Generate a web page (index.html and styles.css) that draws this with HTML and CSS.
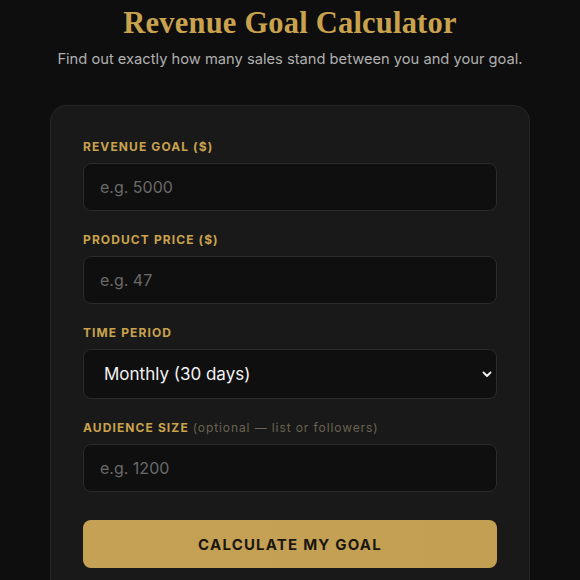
FILE: index.html
```html
<!DOCTYPE html>
<html lang="en">
<head>
<meta charset="utf-8">
<title>Revenue Goal Calculator</title>
<link rel="stylesheet" href="styles.css">
</head>
<body>
<main class="page">
  <header class="hero">
    <h1 class="title">Revenue Goal Calculator</h1>
    <p class="subtitle">Find out exactly how many sales stand between you and your goal.</p>
  </header>
  <form class="card">
    <div class="field">
      <label class="label" for="goal">Revenue Goal ($)</label>
      <input class="input" id="goal" type="text" placeholder="e.g. 5000">
    </div>
    <div class="field">
      <label class="label" for="price">Product Price ($)</label>
      <input class="input" id="price" type="text" placeholder="e.g. 47">
    </div>
    <div class="field">
      <label class="label" for="period">Time Period</label>
      <div class="select-wrap">
        <select class="select" id="period">
          <option>Monthly (30 days)</option>
          <option>Weekly (7 days)</option>
          <option>Quarterly (90 days)</option>
        </select>
        <svg class="chevron" width="10" height="7" viewBox="0 0 10 7"><path d="M1.5 1.5 L5 5 L8.5 1.5" fill="none" stroke="#f2f2f2" stroke-width="1.8" stroke-linecap="round" stroke-linejoin="round"/></svg>
      </div>
    </div>
    <div class="field">
      <label class="label" for="aud">Audience Size <span class="opt">(optional — list or followers)</span></label>
      <input class="input" id="aud" type="text" placeholder="e.g. 1200">
    </div>
    <button class="btn" type="button">Calculate My Goal</button>
  </form>
</main>
</body>
</html>
```
FILE: styles.css
```css
* { box-sizing: border-box; }
html, body { margin: 0; padding: 0; background: #0e0e0e; }
body { font-family: "Inter", "DejaVu Sans", sans-serif; color: #eee; }
.page { width: 580px; display: flex; flex-direction: column; align-items: center; padding-top: 4px; }
.hero { text-align: center; }
.title {
  margin: 0;
  font-family: "Liberation Serif", "DejaVu Serif", serif;
  font-weight: 700;
  font-size: 30.5px;
  line-height: 38px;
  color: #c9a24e;
  letter-spacing: 0.2px;
}
.subtitle {
  margin: 8px 0 0;
  font-size: 14.7px;
  line-height: 18px;
  color: #b0b0b0;
}
.card {
  margin-top: 37px;
  width: 480px;
  background: #191919;
  border: 1px solid #262626;
  border-radius: 16px;
  padding: 33px 32px 40px;
  display: flex;
  flex-direction: column;
  gap: 21px;
}
.field { display: flex; flex-direction: column; gap: 9px; }
.label {
  font-size: 12px;
  line-height: 15px;
  font-weight: 700;
  letter-spacing: 1.1px;
  text-transform: uppercase;
  color: #c9a24e;
}
.opt {
  text-transform: none;
  font-weight: 400;
  color: #6b6350;
  letter-spacing: 0.9px;
}
.input, .select {
  width: 100%;
  height: 48px;
  background: #0f0f0f;
  border: 1px solid #2b2b2b;
  border-radius: 8px;
  padding: 0 16px;
  font-family: inherit;
  font-size: 16px;
  color: #eee;
  outline: none;
}
.input::placeholder { color: #6a6a6a; }
.select-wrap { position: relative; }
.select {
  height: 50px;
  appearance: none;
  -webkit-appearance: none;
  padding: 0 20px;
  font-size: 17px;
  color: #f2f2f2;
}
.chevron { position: absolute; right: 5px; top: 22px; pointer-events: none; }
.btn {
  margin-top: 7px;
  height: 48px;
  border: none;
  border-radius: 8px;
  background: linear-gradient(90deg, #c4a155, #c39f53);
  color: #1a1610;
  font-family: inherit;
  font-size: 15px;
  font-weight: 700;
  letter-spacing: 1.2px;
  text-transform: uppercase;
}
```
